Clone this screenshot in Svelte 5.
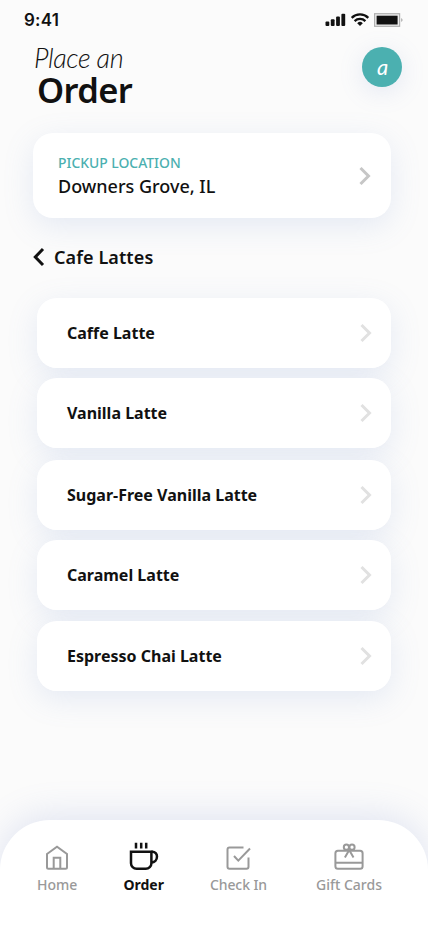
<script lang="ts">
	const lattes = [
		'Caffe Latte',
		'Vanilla Latte',
		'Sugar-Free Vanilla Latte',
		'Caramel Latte',
		'Espresso Chai Latte'
	];

	let active = $state('Order');
</script>

<div class="screen">
	<div class="status">
		<span class="time">9:41</span>
		<svg width="78" height="16" viewBox="0 0 78 16">
			<g fill="#111">
				<rect x="0.5" y="9.5" width="3.8" height="4.5" rx="1"></rect>
				<rect x="5.8" y="7.3" width="3.8" height="6.7" rx="1"></rect>
				<rect x="11.1" y="4.6" width="3.8" height="9.4" rx="1"></rect>
				<rect x="16.4" y="1.8" width="3.8" height="12.2" rx="1"></rect>
			</g>
			<g fill="none" stroke="#111" stroke-width="2.3">
				<path d="M26.7 5.8a12 12 0 0 1 16.6 0"></path>
				<path d="M29.6 9.1a7.8 7.8 0 0 1 10.8 0"></path>
			</g>
			<path d="M35 14l-2.8-2.8a4 4 0 0 1 5.6 0z" fill="#111"></path>
			<rect x="49.6" y="1.7" width="25" height="12.6" fill="#eee" stroke="#b0b0b0" stroke-width="1.2"></rect>
			<rect x="51.6" y="3.7" width="21" height="8.8" fill="#111"></rect>
			<path d="M76.2 6v4q1.4-.8 1.4-2t-1.4-2z" fill="#aaa"></path>
		</svg>
	</div>

	<header>
		<h1>
			<span class="script">Place an</span>
			<span class="title">Order</span>
		</h1>
		<button class="avatar"><span>a</span></button>
	</header>

	<button class="location">
		<span>
			<span class="label">PICKUP LOCATION</span>
			<span class="place">Downers Grove, IL</span>
		</span>
		{@render chevron()}
	</button>

	<button class="back">
		<svg width="12" height="20" viewBox="0 0 12 20">
			<path d="M10 2L2.3 10l7.7 8" fill="none" stroke="#111" stroke-width="3"></path>
		</svg>
		Cafe Lattes
	</button>

	<ul>
		{#each lattes as latte}
			<li>
				<button class="item">{latte} {@render chevron()}</button>
			</li>
		{/each}
	</ul>

	<nav>
		<button class:active={active === 'Home'} onclick={() => (active = 'Home')}>
			<svg width="24" height="30" viewBox="0 0 24 30">
				<path d="M2 13l10-7.200L22 13v13.200a1.500 1.500 0 0 1-1.500 1.500h-17A1.500 1.500 0 0 1 2 26.200z"></path>
				<path d="M8.700 27.700V16.700h6.600v11"></path>
			</svg>
			Home
		</button>
		<button class:active={active === 'Order'} onclick={() => (active = 'Order')}>
			<svg width="30" height="30" viewBox="0 0 30 30">
				<path d="M2 10.800h20.400v11.400a5.600 5.600 0 0 1-5.600 5.600H7.600A5.600 5.600 0 0 1 2 22.200z"></path>
				<path d="M22.400 10.800h1a4.600 4.600 0 0 1 4.600 4.800c0 3.600-2.400 5.800-5.600 5.800"></path>
				<path d="M7 1.700v5.700M12.200 1.700v5.700M17.200 1.700v5.700"></path>
			</svg>
			Order
		</button>
		<button class:active={active === 'Check In'} onclick={() => (active = 'Check In')}>
			<svg width="26" height="30" viewBox="0 0 26 30">
				<path d="M18.500 6.500h-14a2 2 0 0 0-2 2v17.300a2 2 0 0 0 2 2h17a2 2 0 0 0 2-2V16.500"></path>
				<path d="M9 15l4.300 4.600L25 7.500"></path>
			</svg>
			Check In
		</button>
		<button class:active={active === 'Gift Cards'} onclick={() => (active = 'Gift Cards')}>
			<svg width="30" height="30" viewBox="0 0 30 30">
				<rect x="1.400" y="9.700" width="27.200" height="18" rx="2.500"></rect>
				<path d="M1.400 21.700h27.200M15.200 9l-4.300 7.500M15.200 9l4.300 7.500"></path>
				<circle cx="12.400" cy="6.200" r="2.600"></circle>
				<circle cx="18" cy="6.200" r="2.600"></circle>
			</svg>
			Gift Cards
		</button>
	</nav>
</div>

{#snippet chevron()}
	<svg class="chevron" width="12" height="20" viewBox="0 0 12 20">
		<path d="M1.5 2l8 8-8 8" fill="none" stroke="currentColor" stroke-width="3"></path>
	</svg>
{/snippet}

<style>
	:global(body) {
		margin: 0;
		background: #fbfbfb;
	}

	.screen {
		display: flex;
		flex-direction: column;
		box-sizing: border-box;
		height: 926px;
		overflow: hidden;
		background: #fbfbfb;
		color: #111;
		font-family: 'Noto Sans', sans-serif;
	}

	button {
		padding: 0;
		border: none;
		background: none;
		color: inherit;
		font: inherit;
		text-align: left;
		cursor: pointer;
	}

	.status {
		display: flex;
		justify-content: space-between;
		align-items: center;
		height: 40px;
		padding: 0 25px 0 24px;
	}

	.time {
		font: 600 17px/20px Inter, sans-serif;
		letter-spacing: 0.2px;
	}

	header {
		display: flex;
		justify-content: space-between;
		height: 93px;
		padding: 0 26px 0 34px;
	}

	h1 {
		margin: 0;
		font-weight: 400;
	}

	.script {
		display: block;
		height: 29px;
		font: italic 300 27px/36px Lato, sans-serif;
		letter-spacing: -0.4px;
	}

	.title {
		display: block;
		padding-left: 3px;
		font-size: 34.5px;
		font-weight: 600;
		letter-spacing: -0.6px;
		line-height: 42px;
	}

	.avatar {
		width: 40px;
		height: 40px;
		margin-top: 7px;
		border-radius: 50%;
		background: #4bb0b0;
		box-shadow: 0 5px 25px rgba(120, 145, 205, 0.18);
		color: #fff;
		text-align: center;

		& span {
			display: block;
			padding-left: 1px;
			font: italic 400 22px/34px Lato, sans-serif;
		}
	}

	.location {
		display: flex;
		flex-shrink: 0;
		justify-content: space-between;
		align-items: center;
		box-sizing: border-box;
		height: 85px;
		margin: 0 37px 0 33px;
		padding: 0 20px 0 25px;
		border-radius: 20px;
		background: #fff;
		box-shadow: 0 8px 30px rgba(120, 150, 205, 0.17);

		& .label {
			display: block;
			padding-top: 1px;
			color: #4bb0b0;
			font-size: 13.9px;
			font-weight: 500;
			line-height: 20px;
		}

		& .place {
			display: block;
			font-size: 18px;
			font-weight: 500;
			line-height: 27px;
		}
	}

	.chevron {
		color: #c6c6c6;
	}

	.back {
		display: flex;
		align-items: center;
		gap: 9px;
		height: 26px;
		margin: 26px 0 0 33px;
		font-size: 18px;
		font-weight: 650;
		letter-spacing: 0.1px;
	}

	ul {
		margin: 28px 37px 0;
		padding: 0;
		list-style: none;
	}

	li {
		height: 70px;
		margin-bottom: 10px;
		border-radius: 20px;
		box-shadow: 0 8px 30px rgba(120, 150, 205, 0.17);

		&:nth-child(2) {
			margin-bottom: 12px;
		}

		&:nth-child(4) {
			margin-bottom: 11px;
		}
	}

	.item {
		/* keeps each row above the next row's shadow */
		position: relative;
		display: flex;
		justify-content: space-between;
		align-items: center;
		width: 100%;
		height: 70px;
		padding: 0 19px 0 30px;
		border-radius: 20px;
		background: #fff;
		font-size: 16px;
		font-weight: 700;

		& :global(.chevron) {
			color: #e1e1e1;
		}
	}

	nav {
		display: flex;
		box-sizing: border-box;
		height: 106px;
		margin-top: auto;
		padding: 21px 46px 0 37px;
		justify-content: space-between;
		border-radius: 50px 50px 0 0;
		background: #fff;
		box-shadow: 0 -5px 35px rgba(120, 140, 205, 0.2);

		& button {
			display: flex;
			flex-direction: column;
			align-items: center;
			height: 60px;
			color: #999;
			font-size: 14px;
			font-weight: 500;
			line-height: 24px;
			white-space: nowrap;

			&:nth-child(3) {
				margin-right: 3px;
				letter-spacing: -0.1px;
			}

			& svg {
				margin-bottom: 2px;
				fill: none;
				stroke: currentColor;
				stroke-width: 2;
			}

			&.active {
				color: #111;
				font-weight: 700;

				& svg {
					stroke-width: 2.5;
				}
			}
		}
	}
</style>
